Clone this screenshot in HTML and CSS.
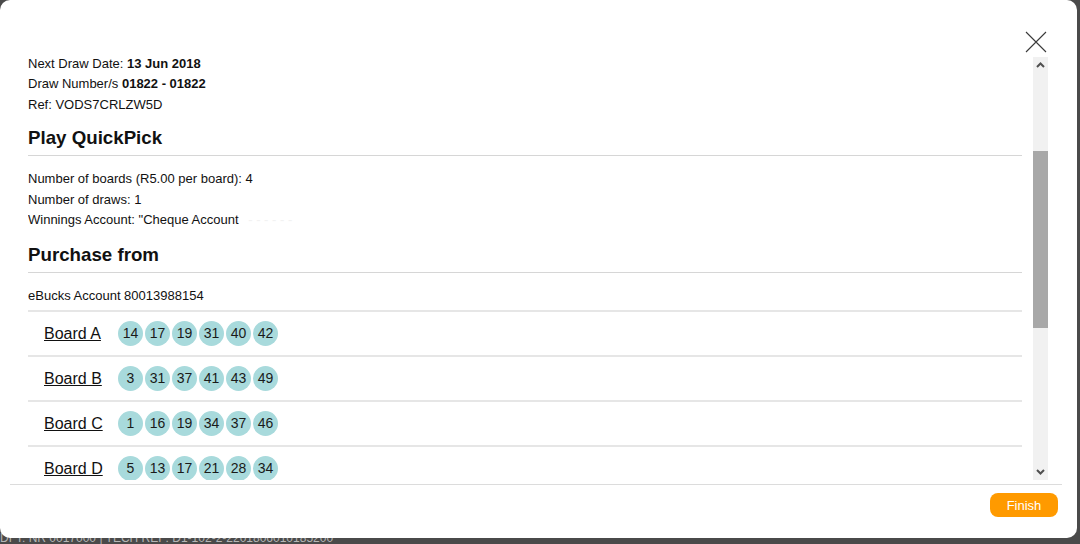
FILE: index.html
```html
<!DOCTYPE html>
<html>
<head>
<meta charset="utf-8">
<link rel="stylesheet" href="styles.css">
</head>
<body>
<div class="page">
  <div class="page-footer">DFT: NR 0017000 | TECH REF: D1-102-2-2201806010185200</div>
</div>
<div class="modal">
  <div class="modal-top">
    <button class="close" aria-label="Close">
      <svg width="22" height="22" viewBox="0 0 22 22"><path d="M1 1 L21 21 M21 1 L1 21" stroke="#3a3a3a" stroke-width="1.1" fill="none"/></svg>
    </button>
  </div>
  <div class="modal-body">
    <div class="content">
      <div class="scroll-inner">
        <p class="line">Next Draw Date: <b>13 Jun 2018</b></p>
        <p class="line">Draw Number/s <b>01822 - 01822</b></p>
        <p class="line line-ref">Ref: VODS7CRLZW5D</p>
        <h3 class="heading">Play QuickPick</h3>
        <div class="info">
          <p class="line2">Number of boards (R5.00 per board): 4</p>
          <p class="line2">Number of draws: 1</p>
          <p class="line2">Winnings Account: "Cheque Account <span class="faded">- - - - - -</span></p>
        </div>
        <h3 class="heading heading-second">Purchase from</h3>
        <p class="account">eBucks Account 80013988154</p>
        <div class="boards">
          <div class="board">
            <a class="board-name">Board A</a>
            <div class="balls"><span class="ball">14</span><span class="ball">17</span><span class="ball">19</span><span class="ball">31</span><span class="ball">40</span><span class="ball">42</span></div>
          </div>
          <div class="board">
            <a class="board-name">Board B</a>
            <div class="balls"><span class="ball">3</span><span class="ball">31</span><span class="ball">37</span><span class="ball">41</span><span class="ball">43</span><span class="ball">49</span></div>
          </div>
          <div class="board">
            <a class="board-name">Board C</a>
            <div class="balls"><span class="ball">1</span><span class="ball">16</span><span class="ball">19</span><span class="ball">34</span><span class="ball">37</span><span class="ball">46</span></div>
          </div>
          <div class="board">
            <a class="board-name">Board D</a>
            <div class="balls"><span class="ball">5</span><span class="ball">13</span><span class="ball">17</span><span class="ball">21</span><span class="ball">28</span><span class="ball">34</span></div>
          </div>
        </div>
      </div>
    </div>
    <div class="scrollbar">
      <div class="sb-arrow">
        <svg width="15" height="16" viewBox="0 0 15 16"><path d="M4 10 L7.5 6.5 L11 10" stroke="#505050" stroke-width="2" fill="none"/></svg>
      </div>
      <div class="sb-track">
        <div class="sb-space-top"></div>
        <div class="sb-thumb"></div>
      </div>
      <div class="sb-arrow">
        <svg width="15" height="16" viewBox="0 0 15 16"><path d="M4 6 L7.5 9.5 L11 6" stroke="#505050" stroke-width="2" fill="none"/></svg>
      </div>
    </div>
  </div>
  <div class="modal-footer">
    <button class="finish">Finish</button>
  </div>
</div>
</body>
</html>
```
FILE: styles.css
```css
html, body {
  margin: 0;
  padding: 0;
}
body {
  width: 1080px;
  height: 544px;
  overflow: hidden;
  background: #4a4a4a;
  font-family: "Liberation Sans", Arial, sans-serif;
  color: #111;
}
.page {
  height: 544px;
  display: flex;
  flex-direction: column;
  justify-content: flex-end;
}
.page-footer {
  height: 12px;
  line-height: 12px;
  font-size: 12px;
  color: #b5b5b5;
  white-space: nowrap;
  overflow: hidden;
}
.modal {
  position: fixed;
  top: 0;
  left: 0;
  width: 1077px;
  height: 538px;
  background: #fff;
  border-radius: 10px;
  display: flex;
  flex-direction: column;
}
.modal-top {
  height: 57px;
  box-sizing: border-box;
  display: flex;
  justify-content: flex-end;
  padding-top: 31px;
  padding-right: 30px;
}
.close {
  width: 22px;
  height: 22px;
  padding: 0;
  border: 0;
  background: none;
  display: block;
}
.close svg {
  display: block;
}
.modal-body {
  height: 423px;
  display: flex;
  padding-left: 28px;
  gap: 11px;
  padding-right: 29px;
}
.content {
  flex: 1;
  overflow: hidden;
}
.scroll-inner {
  margin-top: -3px;
}
.line {
  margin: 0;
  font-size: 13px;
  line-height: 20px;
}
.line-ref {
  margin-top: 1px;
}
.heading {
  margin: 12px 0 0;
  font-size: 18.72px;
  line-height: 22px;
  font-weight: bold;
  padding-bottom: 6px;
  border-bottom: 1px solid #d6d6d6;
}
.heading-second {
  margin-top: 13.5px;
}
.info {
  padding-top: 13px;
}
.line2 {
  margin: 0;
  font-size: 13px;
  line-height: 20.5px;
}
.faded {
  color: #f2f2f2;
  margin-left: 6px;
}
.account {
  margin: 0;
  font-size: 13px;
  line-height: 20px;
  padding-top: 13px;
  padding-bottom: 4px;
  border-bottom: 2px solid #e6e6e6;
}
.board {
  height: 43px;
  display: flex;
  align-items: center;
  padding-left: 16px;
  gap: 16px;
  border-bottom: 2px solid #e6e6e6;
}
.board-name {
  font-size: 16px;
  color: #111;
  text-decoration: underline;
  width: 58px;
  white-space: nowrap;
}
.balls {
  display: flex;
  gap: 2px;
}
.ball {
  width: 25px;
  height: 25px;
  border-radius: 50%;
  background: #a8dadc;
  font-size: 14px;
  line-height: 25px;
  text-align: center;
  color: #1a1a1a;
}
.scrollbar {
  width: 15px;
  background: #f1f1f1;
  display: flex;
  flex-direction: column;
}
.sb-arrow {
  height: 16px;
}
.sb-arrow svg {
  display: block;
}
.sb-track {
  flex: 1;
}
.sb-space-top {
  height: 78px;
}
.sb-thumb {
  height: 177px;
  background: #a8a8a8;
}
.modal-footer {
  margin: 4px 15px 0 10px;
  border-top: 1px solid #dcdcdc;
  padding: 8px 4px 0 0;
  display: flex;
  justify-content: flex-end;
}
.finish {
  width: 68px;
  height: 24px;
  border: 0;
  border-radius: 8px;
  background: #ff9a00;
  color: #fff;
  font-family: "Liberation Sans", Arial, sans-serif;
  font-size: 13px;
  padding: 0;
}
```
